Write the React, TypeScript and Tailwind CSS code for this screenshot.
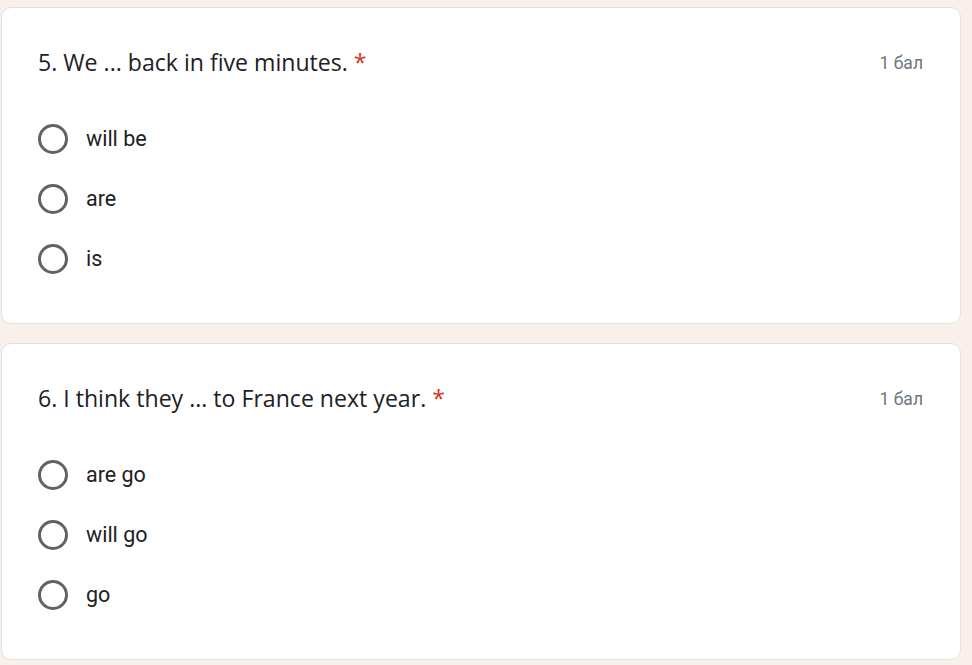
import React from 'react';

interface Question {
  title: string;
  options: string[];
}

const questions: Question[] = [
  { title: '5. We ... back in five minutes.', options: ['will be', 'are', 'is'] },
  { title: '6. I think they ... to France next year.', options: ['are go', 'will go', 'go'] },
];

const QuestionCard: React.FC<{ q: Question }> = ({ q }) => (
  <div className="bg-white border border-[#e6e0dc] rounded-[10px] pl-[36px] pr-[37px] pt-[39px] h-[317px]">
    <div className="flex items-start justify-between">
      <h2 className="-mt-[1px] text-[23.1px] leading-[32px] text-[#202124] font-['Open_Sans',sans-serif]">
        {q.title} <span className="text-[#d93025]">*</span>
      </h2>
      <span className="text-[17.5px] leading-[32px] text-[#70757a] font-['Roboto',sans-serif]">1 бал</span>
    </div>
    <div className="mt-[45px] flex flex-col gap-[30px]">
      {q.options.map((o) => (
        <label key={o} className="flex items-center gap-[18px] h-[30px]">
          <span className="w-[30px] h-[30px] rounded-full border-[3px] border-[#5f6368] shrink-0" />
          <span className="text-[21.5px] text-[#202124] font-['Roboto',sans-serif]">{o}</span>
        </label>
      ))}
    </div>
  </div>
);

export default function App() {
  return (
    <div className="w-[972px] h-[665px] bg-[#faf0eb] pt-[7px] pl-[1px] pr-[11px] flex flex-col gap-[19px] overflow-hidden">
      {questions.map((q) => (
        <QuestionCard key={q.title} q={q} />
      ))}
    </div>
  );
}
